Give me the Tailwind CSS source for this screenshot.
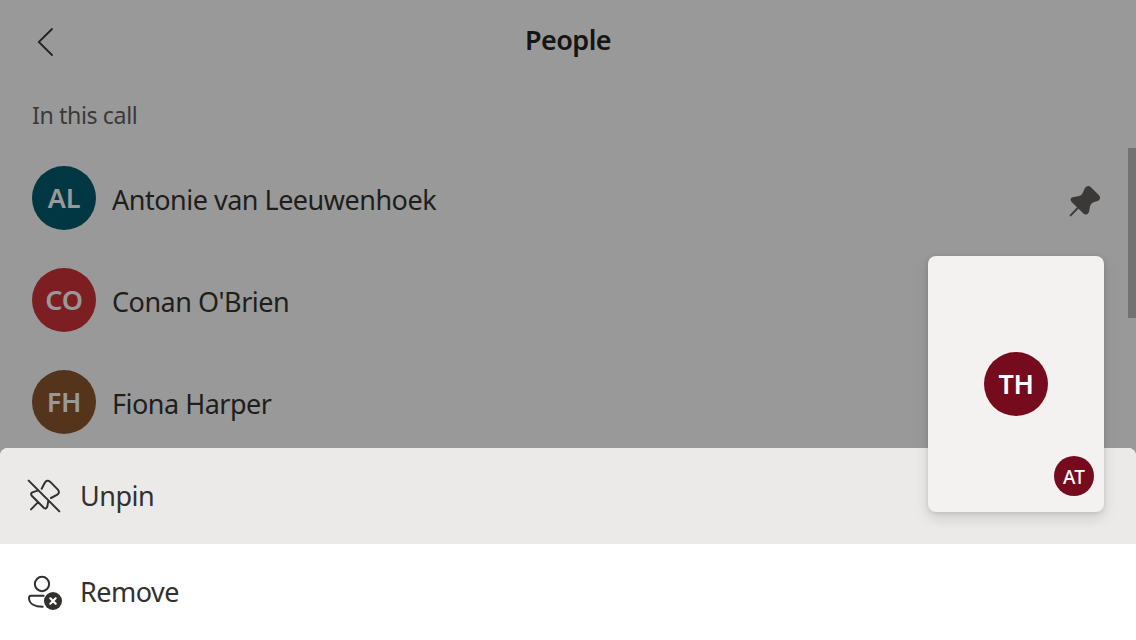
<!DOCTYPE html>
<html lang="en">
<head>
<meta charset="utf-8">
<title>People</title>
<script src="https://cdn.jsdelivr.net/npm/@tailwindcss/browser@4"></script>
</head>
<body class="relative h-[640px] w-[1136px] overflow-hidden bg-[#999999] font-['Noto_Sans','Open_Sans',sans-serif] text-[#1e1e1d]">
  <div class="flex h-full flex-col">
    <header class="grid h-[82px] shrink-0 grid-cols-[1fr_auto_1fr] items-center px-8">
      <svg class="h-8 w-8" viewBox="0 0 32 32" fill="none" stroke="#222221" stroke-width="1.8" stroke-linecap="round"><path d="M20 4 6.800 17l13.200 13"/></svg>
      <h1 class="mb-[3px] text-[27px] leading-[36px] font-semibold tracking-[-0.6px] text-[#161515]">People</h1>
    </header>
    <main class="flex h-[366px] shrink-0 flex-col px-8">
      <h2 class="mt-[17px] h-8 text-[23.2px] leading-8 tracking-[-0.4px] text-[#3a3a39]">In this call</h2>
      <ul class="mt-[35px] flex flex-col gap-[38px] tracking-[-0.5px]">
        <li class="flex h-16 items-center gap-4">
          <span class="flex size-16 items-center justify-center rounded-full bg-[#003743] text-[27px] font-semibold tracking-[-0.3px] text-[#999999]">AL</span>
          <span class="mt-[5px] flex-1 text-[27px]">Antonie van Leeuwenhoek</span>
          <svg class="mt-1 -mr-0.5 size-10" viewBox="0 0 120 120" fill="#3a3938"><path d="M57 24Q65 13 74 21L99 46Q107 55 97 62L82 67Q74 71 72 79L69 96Q63 108 53 101L17 66Q9 56 20 52L40 48Q47 46 50 39Z"/><path d="M14 106 39 80" stroke="#3a3938" stroke-width="6" stroke-linecap="round"/></svg>
        </li>
        <li class="flex h-16 items-center gap-4">
          <span class="flex size-16 items-center justify-center rounded-full bg-[#7d1f22] text-[27px] font-semibold tracking-[-0.3px] text-[#999999]">CO</span>
          <span class="mt-[5px] flex-1 text-[27px]">Conan O'Brien</span>
        </li>
        <li class="flex h-16 items-center gap-4">
          <span class="flex size-16 items-center justify-center rounded-full bg-[#55341c] text-[27px] font-semibold tracking-[-0.3px] text-[#999999]">FH</span>
          <span class="mt-[5px] flex-1 text-[27px]">Fiona Harper</span>
        </li>
      </ul>
    </main>
    <section class="flex flex-1 flex-col overflow-hidden rounded-t-lg bg-white text-[27px] tracking-[-0.5px] text-[#323130]">
      <div class="flex h-24 shrink-0 items-center gap-4 bg-[#ebeae9] px-6">
        <svg class="size-10" viewBox="0 0 120 120" fill="none" stroke="#323130" stroke-width="6" stroke-linecap="round" stroke-linejoin="round"><path d="M14 14 106 106M53 38 62 21Q69 10 78 17L101 40Q109 49 100 56L81 66M43 43 25 49Q18 53 24 60L60 96Q67 100 70 91L73 75M21 100 41 80"/></svg>
        <span class="mt-px">Unpin</span>
      </div>
      <div class="flex h-24 shrink-0 items-center gap-4 px-6">
        <svg class="size-10" viewBox="0 0 120 120" fill="none" stroke="#323130" stroke-width="6" stroke-linecap="round"><circle cx="54" cy="36" r="21.500"/><path d="M59 71H22Q15 71 15 78C15 96 34 104 56 104"/><circle cx="87" cy="87" r="27" fill="#323130" stroke="none"/><path d="m79 79 16 16M95 79 79 95" stroke="#fff" stroke-width="6.500"/></svg>
        <span class="mt-px">Remove</span>
      </div>
    </section>
  </div>
  <div class="absolute top-[148px] right-0 h-[170px] w-2 bg-[#727272]"></div>
  <aside class="absolute top-64 left-[928px] flex h-64 w-44 items-center justify-center rounded-lg bg-[#f3f2f1] text-white shadow-[0_6px_14px_rgba(0,0,0,0.13),0_1px_4px_rgba(0,0,0,0.11)]">
    <span class="flex size-16 items-center justify-center rounded-full bg-[#750b1c] text-[27px] font-semibold tracking-[-0.3px]">TH</span>
    <span class="absolute right-[10px] bottom-4 flex size-10 items-center justify-center rounded-full bg-[#750b1c] pt-0.5 text-[19px] font-medium">AT</span>
  </aside>
</body>
</html>
